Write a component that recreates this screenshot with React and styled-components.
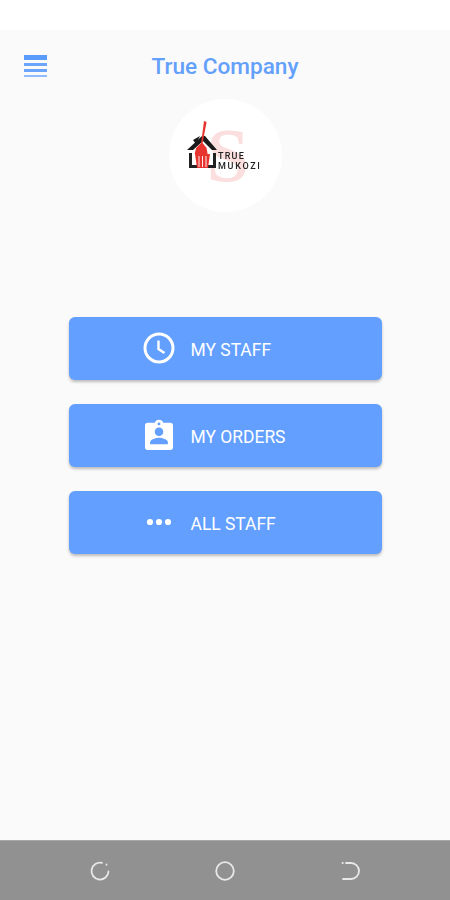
import styled, { createGlobalStyle } from "styled-components";

const GlobalStyle = createGlobalStyle`
  html, body {
    margin: 0;
    padding: 0;
    background: #fafafa;
    font-family: Roboto, "Liberation Sans", sans-serif;
  }
`;

const Screen = styled.div`
  width: 450px;
  height: 900px;
  display: flex;
  flex-direction: column;
  background: #fafafa;
  overflow: hidden;
`;

const StatusBar = styled.div`
  height: 30px;
  background: #ffffff;
`;

const Main = styled.main`
  flex: 1;
  display: flex;
  flex-direction: column;
  align-items: center;
`;

const Header = styled.header`
  width: 100%;
  height: 68px;
  display: grid;
  grid-template-columns: 1fr auto 1fr;
  align-items: center;
  box-sizing: border-box;
  padding: 4px 24px 0;
`;

const MenuButton = styled.div`
  width: 23px;
  height: 22px;
  display: flex;
  flex-direction: column;
  justify-content: space-between;
  box-sizing: border-box;
`;

const MenuLine = styled.span`
  display: block;
  height: ${(p) => p.$h}px;
  background: ${(p) => p.$color};
`;

const Title = styled.h1`
  margin: 0;
  font-size: 22.6px;
  font-weight: 500;
  color: #62a0fb;
`;

const LogoCircle = styled.div`
  width: 113px;
  height: 113px;
  margin-top: 1px;
  border-radius: 50%;
  background: #ffffff;
  filter: blur(0.4px);
`;

const ButtonList = styled.div`
  margin-top: 105px;
  display: flex;
  flex-direction: column;
  gap: 24.5px;
`;

const ActionButton = styled.button`
  width: 313px;
  height: 62.5px;
  display: flex;
  align-items: center;
  gap: 16px;
  padding: 0 0 0 74px;
  border: none;
  border-radius: 6px;
  background: #629fff;
  box-shadow: 0 2px 3px rgba(0, 0, 0, 0.25);
  color: #ffffff;
  font-family: inherit;
  font-size: 17.45px;
  font-weight: 400;
`;

const ButtonLabel = styled.span`
  padding-top: 3px;
`;

const IconBox = styled.span`
  width: 32px;
  height: 32px;
  display: flex;
  align-items: center;
  justify-content: center;
`;

const NavBar = styled.nav`
  height: 59px;
  display: grid;
  grid-template-columns: repeat(3, 125px);
  justify-content: center;
  align-items: center;
  background: #919191;
  border-top: 1px solid #a8a8a8;
`;

const NavItem = styled.div`
  display: flex;
  justify-content: center;
`;

const ClockIcon = () => (
  <svg width="32" height="32" viewBox="0 0 32 32" fill="none" stroke="#fff" strokeWidth="3">
    <circle cx="16" cy="16" r="14" />
    <path d="M15.5 8.5V17l6 4" strokeWidth="2.4" />
  </svg>
);

const BadgeIcon = () => (
  <svg width="28" height="32" viewBox="0 0 30 32">
    <path
      fill="#fff"
      fillRule="evenodd"
      d="M3 3h7.5a4.7 4.7 0 0 1 9 0H27a3 3 0 0 1 3 3v23a3 3 0 0 1-3 3H3a3 3 0 0 1-3-3V6a3 3 0 0 1 3-3zM15 2.6a1.5 1.5 0 1 0 0 3 1.5 1.5 0 0 0 0-3z"
    />
    <circle cx="15" cy="12.5" r="4.6" fill="#629fff" />
    <path fill="#629fff" d="M5.5 26v-2.2c0-3.2 6.3-4.9 9.5-4.9s9.5 1.7 9.5 4.9V26z" />
  </svg>
);

const DotsIcon = () => (
  <svg width="26" height="8" viewBox="0 0 26 8" fill="#fff">
    <circle cx="4" cy="4" r="3.1" />
    <circle cx="13" cy="4" r="3.1" />
    <circle cx="22" cy="4" r="3.1" />
  </svg>
);

const Logo = () => (
  <svg width="113" height="113" viewBox="0 0 113 113">
    <text
      x="59"
      y="82"
      textAnchor="middle"
      fontFamily="Liberation Serif, serif"
      fontWeight="700"
      fontSize="76"
      fill="#fbdfdf"
    >
      S
    </text>
    {/* roof */}
    <path d="M18 51 L33 37 L36 37 L48 51 L43 51 L34 42 L24 51z" fill="#1a1a1a" />
    <path d="M24 41 L31 37 L27 45z" fill="#1a1a1a" />
    {/* walls */}
    <path d="M20 54h3v12h5v3h-8z M47 54h-3v12h-5v3h8z" fill="#222" />
    {/* broom */}
    <path d="M35 22l2.6 1-4 21 4 5 1 6h-13l1.5-6 5-5z" fill="#e8342e" />
    <path d="M26 55h15l-2 14H28z" fill="#e8342e" />
    <path d="M30 57v11M33.5 57v11M37 57v11" stroke="#fff" strokeWidth="0.9" />
    <text x="49" y="59.5" fontFamily="Roboto, sans-serif" fontWeight="500" fontSize="9" letterSpacing="1.2" fill="#222">
      TRUE
    </text>
    <text x="49" y="69.5" fontFamily="Roboto, sans-serif" fontWeight="500" fontSize="9" letterSpacing="1.7" fill="#222">
      MUKOZI
    </text>
  </svg>
);

const RecentIcon = () => (
  <svg width="22" height="22" viewBox="0 0 22 22" fill="none" stroke="#e8e8e8" strokeWidth="1.8" strokeLinecap="round">
    <path d="M13 2.8A8.5 8.5 0 1 0 19.5 11.5" />
    <path d="M17.5 4.5v.3" />
  </svg>
);

const HomeIcon = () => (
  <svg width="22" height="22" viewBox="0 0 22 22" fill="none" stroke="#e8e8e8" strokeWidth="1.8">
    <circle cx="11" cy="11" r="8.8" />
  </svg>
);

const BackIcon = () => (
  <svg width="22" height="22" viewBox="0 0 22 22" fill="none" stroke="#e8e8e8" strokeWidth="1.8" strokeLinecap="round">
    <path d="M7 3h5a8 8 0 0 1 0 16H4" />
    <path d="M3.5 3h.3" />
  </svg>
);

const actions = [
  { label: "MY STAFF", icon: <ClockIcon /> },
  { label: "MY ORDERS", icon: <BadgeIcon /> },
  { label: "ALL STAFF", icon: <DotsIcon /> },
];

const App = () => {
  return (
    <>
      <GlobalStyle />
      <Screen>
        <StatusBar />
        <Main>
          <Header>
            <MenuButton>
              <MenuLine $h={5} $color="#5a9bfb" />
              <MenuLine $h={3} $color="#6aa5fb" />
              <MenuLine $h={3} $color="#6aa5fb" />
              <MenuLine $h={2} $color="#8fbcfc" />
            </MenuButton>
            <Title>True Company</Title>
          </Header>
          <LogoCircle>
            <Logo />
          </LogoCircle>
          <ButtonList>
            {actions.map((a) => (
              <ActionButton key={a.label}>
                <IconBox>{a.icon}</IconBox>
                <ButtonLabel>{a.label}</ButtonLabel>
              </ActionButton>
            ))}
          </ButtonList>
        </Main>
        <NavBar>
          <NavItem>
            <RecentIcon />
          </NavItem>
          <NavItem>
            <HomeIcon />
          </NavItem>
          <NavItem>
            <BackIcon />
          </NavItem>
        </NavBar>
      </Screen>
    </>
  );
};

export default App;
